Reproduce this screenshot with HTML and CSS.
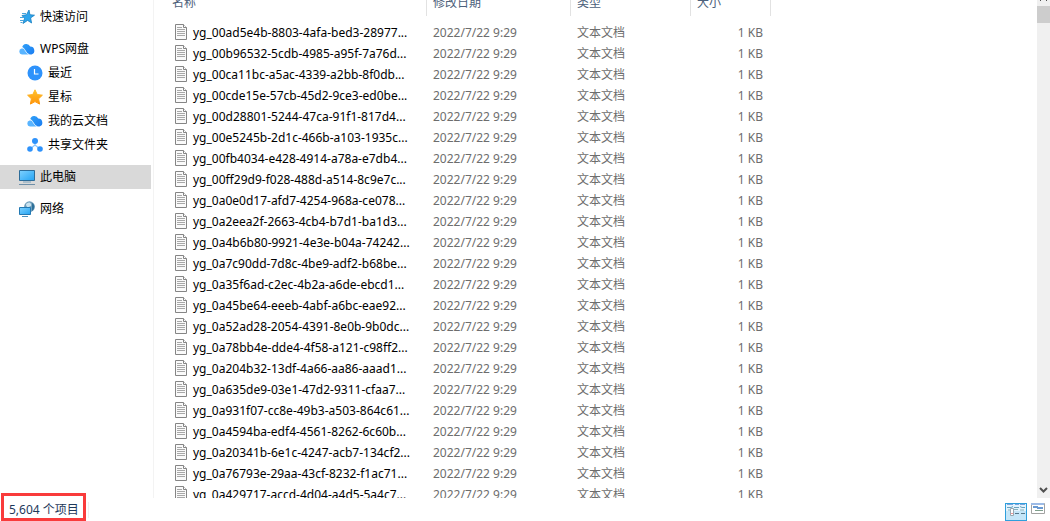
FILE: index.html
```html
<!DOCTYPE html>
<html lang="zh-CN">
<head>
  <meta charset="UTF-8" />
  <meta name="viewport" content="width=device-width, initial-scale=1.0"/>
  <title>此电脑</title>
  <link rel="stylesheet" href="styles.css">
</head>
<body>
  <svg class="defs" aria-hidden="true">
    <defs>
      <linearGradient id="blue" x1="0" y1="0" x2="1" y2="1">
        <stop offset="0" stop-color="#2fa0f8"/>
        <stop offset="1" stop-color="#1b7df2"/>
      </linearGradient>
      <linearGradient id="screen" x1="0" y1="0" x2="1" y2="1">
        <stop offset="0" stop-color="#7fd2ff"/>
        <stop offset="1" stop-color="#23a3f3"/>
      </linearGradient>
      <linearGradient id="gold" x1="0" y1="0" x2="0" y2="1">
        <stop offset="0" stop-color="#ffc22e"/>
        <stop offset="1" stop-color="#ff9408"/>
      </linearGradient>
      <symbol id="cloud" viewBox="0 0 16 16">
        <path d="M3 13.500a3 3 0 0 1-.4-5.900 4 4 0 0 1 3.900.4l4 5.500z" fill="#59b4ff"/>
        <path d="M3.200 6.300a4.200 4.200 0 0 1 8-.8 4.100 4.100 0 0 1 1.300 8c-2.400.4-4-1-5.200-2.700C6.200 9 5.300 7 3.200 6.300z" fill="url(#blue)"/>
        <path d="M3 6.700C6 6.800 6.300 12 10 13.500" fill="none" stroke="#fff" stroke-width=".8"/>
      </symbol>
      <symbol id="file" viewBox="0 0 12 16">
        <path d="M.5.500h8l3 3v12H.500z" fill="#fafafa" stroke="#858585"/>
        <path d="M8.500.500v3h3" fill="#fff" stroke="#858585"/>
        <path d="M2 3.500h5M2 5.500h8M2 7.500h8M2 9.500h8M2 11.500h8" stroke="#a8a8a8"/>
      </symbol>
    </defs>
  </svg>

  <main class="main">
    <nav class="sidebar">
      <div class="group">
        <a class="item" href="#">
          <svg class="icon" viewBox="0 0 16 16">
            <path d="M10 1l.9 4.700 4.600.5-3.900 2.700 1 5.100-4-2.600L4 14.500l1.500-5L3 6.500l4.500-.8z" fill="#2fa5ec" stroke="#167fc2" stroke-width=".8"/>
            <path d="M3 4.500h4M1 8.500h4M1 11.500h4M1.500 13.500h2" stroke="#4aa5dc"/>
          </svg>
          快速访问
        </a>
      </div>
      <div class="group">
        <a class="item" href="#"><svg class="icon"><use href="#cloud"/></svg>WPS网盘</a>
        <a class="item sub" href="#">
          <svg class="icon" viewBox="0 0 16 16">
            <circle cx="8" cy="8" r="7.500" fill="#2e92fb"/>
            <path d="M7.500 4v5h4" fill="none" stroke="#fff" stroke-width="1.200"/>
          </svg>
          最近
        </a>
        <a class="item sub" href="#">
          <svg class="icon" viewBox="0 0 16 16">
            <path d="M8 .8l2.200 4.700 5.200.7-3.800 3.600 1 5.300L8 12.600l-4.600 2.500 1-5.300L.6 6.200l5.200-.7z" fill="url(#gold)" stroke="url(#gold)" stroke-linejoin="round"/>
          </svg>
          星标
        </a>
        <a class="item sub" href="#"><svg class="icon"><use href="#cloud"/></svg>我的云文档</a>
        <a class="item sub" href="#">
          <svg class="icon" viewBox="0 0 16 16">
            <path d="M8 4v5M8 8l-5 4M8 8l5 4" stroke="#8cc6ff" stroke-width="1.200"/>
            <circle cx="8" cy="4" r="3" fill="#2e92fb"/>
            <circle cx="3" cy="12" r="2.800" fill="#2e92fb"/>
            <circle cx="13" cy="12" r="2.800" fill="#2e92fb"/>
          </svg>
          共享文件夹
        </a>
      </div>
      <div class="group">
        <a class="item active" href="#">
          <svg class="icon" viewBox="0 0 16 16">
            <path d="M.5 1.500h15v10H.500z" fill="url(#screen)" stroke="#2c6c99"/>
            <path d="M4 13h8" stroke="#7fa3bc"/>
            <path d="M0 15.500h16" stroke="#6f8fa8"/>
          </svg>
          此电脑
        </a>
      </div>
      <div class="group">
        <a class="item" href="#">
          <svg class="icon" viewBox="0 0 16 16">
            <circle cx="10.500" cy="5.700" r="5.400" fill="#6f9dba"/>
            <path d="M7 3c2-2 4-2 5 0s-1 2-2 3-3 0-3-3z" fill="#c9e3f0"/>
            <path d="M13 2c3 1 3 6 0 8z" fill="#2f7098"/>
            <path d="M.5 6.500h11v7H.500z" fill="url(#screen)" stroke="#2279b3"/>
            <path d="M3 15.500h6" stroke="#4b90bd"/>
          </svg>
          网络
        </a>
      </div>
    </nav>

    <section class="list">
      <table class="files">
        <colgroup>
          <col class="col-name"><col class="col-date"><col class="col-type"><col class="col-size">
        </colgroup>
        <thead>
          <tr><th class="first">名称</th><th>修改日期</th><th>类型</th><th>大小</th></tr>
        </thead>
        <tbody id="rows"></tbody>
      </table>
    </section>

    <div class="scrollbar">
      <button class="arrow up" aria-label="向上滚动">
        <svg width="9" height="6" viewBox="0 0 9 6"><path d="M1.500 0v1M7.500 0v1" stroke="#505050"/></svg>
      </button>
      <div class="thumb"></div>
      <button class="arrow down" aria-label="向下滚动">
        <svg width="9" height="6" viewBox="0 0 9 6"><path d="M1 1l3.500 3.500L8 1" fill="none" stroke="#505050" stroke-width="2"/></svg>
      </button>
    </div>
  </main>

  <footer class="status">
    <span class="count">5,604 个项目</span>
    <div class="views">
      <button class="view selected" aria-label="详细信息">
        <svg width="20" height="16" viewBox="0 0 20 16">
          <path d="M0 0h20v7H0z" fill="#e3f3fd"/>
          <path d="M1 .5h6M9 .5h4M14 .5h5" stroke="#7ba3dc"/>
          <path d="M1 3.500h4l2-1M8 3.500h5M14 2.500l2 1h3" fill="none" stroke="#6ba2bd"/>
          <path d="M2 6h2M8 5.500h4M14 6h4" stroke="#86b3bd"/>
          <path d="M4.500 4.500h3v7h-3z" fill="#fff" stroke="#9aa8b0"/>
          <path d="M5.500 9h1v1h-1z" fill="#d33"/>
          <path d="M9 9.500h4M15 9.500h4" stroke="#56798c"/>
        </svg>
      </button>
      <button class="view" aria-label="大图标">
        <svg width="14" height="11" viewBox="0 0 14 11">
          <path d="M.5.500h13v10H.500z" fill="#fff" stroke="#a3a3a3"/>
          <path d="M0 1h13" stroke="#9dbbe6" stroke-width="2"/>
          <path d="M2 4h5M6 5h6" stroke="#6a9ad2" stroke-width="2"/>
          <path d="M4 7.500h8" stroke="#7f9f8c"/>
        </svg>
      </button>
    </div>
    <div class="highlight"></div>
  </footer>

  <script>
    const files = [
      "yg_00ad5e4b-8803-4afa-bed3-28977...",
      "yg_00b96532-5cdb-4985-a95f-7a76d...",
      "yg_00ca11bc-a5ac-4339-a2bb-8f0db...",
      "yg_00cde15e-57cb-45d2-9ce3-ed0be...",
      "yg_00d28801-5244-47ca-91f1-817d4...",
      "yg_00e5245b-2d1c-466b-a103-1935c...",
      "yg_00fb4034-e428-4914-a78a-e7db4...",
      "yg_00ff29d9-f028-488d-a514-8c9e7c...",
      "yg_0a0e0d17-afd7-4254-968a-ce078...",
      "yg_0a2eea2f-2663-4cb4-b7d1-ba1d3...",
      "yg_0a4b6b80-9921-4e3e-b04a-74242...",
      "yg_0a7c90dd-7d8c-4be9-adf2-b68be...",
      "yg_0a35f6ad-c2ec-4b2a-a6de-ebcd1...",
      "yg_0a45be64-eeeb-4abf-a6bc-eae92...",
      "yg_0a52ad28-2054-4391-8e0b-9b0dc...",
      "yg_0a78bb4e-dde4-4f58-a121-c98ff2...",
      "yg_0a204b32-13df-4a66-aa86-aaad1...",
      "yg_0a635de9-03e1-47d2-9311-cfaa7...",
      "yg_0a931f07-cc8e-49b3-a503-864c61...",
      "yg_0a4594ba-edf4-4561-8262-6c60b...",
      "yg_0a20341b-6e1c-4247-acb7-134cf2...",
      "yg_0a76793e-29aa-43cf-8232-f1ac71...",
      "yg_0a429717-accd-4d04-a4d5-5a4c7..."
    ];

    document.getElementById("rows").innerHTML = files.map(name => `
      <tr>
        <td><div class="name"><svg class="file-icon"><use href="#file"/></svg>${name}</div></td>
        <td>2022/7/22 9:29</td>
        <td>文本文档</td>
        <td class="size">1 KB</td>
      </tr>`).join("");
  </script>
</body>
</html>
```
FILE: styles.css
```css
* {
  margin: 0;
  padding: 0;
  box-sizing: border-box;
}
body {
  display: flex;
  flex-direction: column;
  height: 100vh;
  overflow: hidden;
  background: #fff;
  color: #000;
  font-family: "Noto Sans", "Noto Sans CJK SC", sans-serif;
  font-size: 12px;
}
button {
  border: none;
  background: none;
  cursor: pointer;
}
.defs {
  position: absolute;
  width: 0;
  height: 0;
}
.main {
  display: flex;
  flex: 1;
  min-height: 0;
}

.sidebar {
  display: flex;
  flex-direction: column;
  gap: 8px;
  flex: 0 0 154px;
  padding: 5px 2px 0 0;
  border-right: 1px solid #f3f3f3;
}
.item {
  display: flex;
  align-items: center;
  gap: 5px;
  height: 24px;
  padding: 0 0 1px 19px;
  color: #000;
  line-height: 18px;
  text-decoration: none;
  white-space: nowrap;
}
.item.sub {
  padding-left: 27px;
}
.item.active {
  background: #d9d9d9;
}
.icon {
  width: 16px;
  height: 16px;
  flex: none;
}

.list {
  flex: 1;
  min-width: 0;
  overflow: hidden;
}
.files {
  width: 617px;
  table-layout: fixed;
  border-collapse: separate;
  border-spacing: 0;
}
.col-name { width: 273px; }
.col-date { width: 144px; }
.col-type { width: 120px; }
.col-size { width: 80px; }
.files th {
  height: 16px;
  padding-left: 6px;
  border-right: 1px solid #e2e2e2;
  color: #4c607a;
  font-weight: normal;
  text-align: left;
  vertical-align: top;
  line-height: 6px;
}
.files th.first {
  padding-left: 18px;
}
/* space between the header and the first row */
.files tbody::before {
  content: "";
  display: block;
  height: 6px;
}
.files td {
  height: 21px;
  padding-left: 6px;
  color: #6d6d6d;
  line-height: 21px;
  white-space: nowrap;
}
.files td.size {
  padding-right: 8px;
  text-align: right;
}
.name {
  display: flex;
  align-items: center;
  gap: 6px;
  padding-left: 15px;
  color: #000;
}
.file-icon {
  width: 12px;
  height: 16px;
  margin-bottom: 1px;
  flex: none;
}

.scrollbar {
  display: flex;
  flex-direction: column;
  flex: 0 0 13px;
  background: #f0f0f0;
}
.arrow {
  display: flex;
  align-items: center;
  justify-content: center;
}
.arrow.up {
  height: 6px;
}
.arrow.down {
  height: 17px;
  margin-top: auto;
}
.thumb {
  height: 17px;
  background: #cdcdcd;
}

.status {
  position: relative;
  display: flex;
  align-items: center;
  justify-content: space-between;
  height: 23px;
  padding: 0 5px 0 9px;
  color: #1e395b;
}
.count {
  padding-right: 9px;
  border-right: 1px solid #f0f0f0;
  line-height: 16px;
}
.views {
  display: flex;
  align-items: flex-start;
  align-self: flex-end;
  gap: 4px;
}
.view {
  display: flex;
  align-items: center;
  justify-content: center;
}
.view.selected {
  border: 1px solid #2f9fdc;
  background: #c5e6f8;
}
.highlight {
  position: absolute;
  left: 1px;
  bottom: 0;
  width: 85px;
  height: 28px;
  border: 3px solid #f93b3b;
}
```
